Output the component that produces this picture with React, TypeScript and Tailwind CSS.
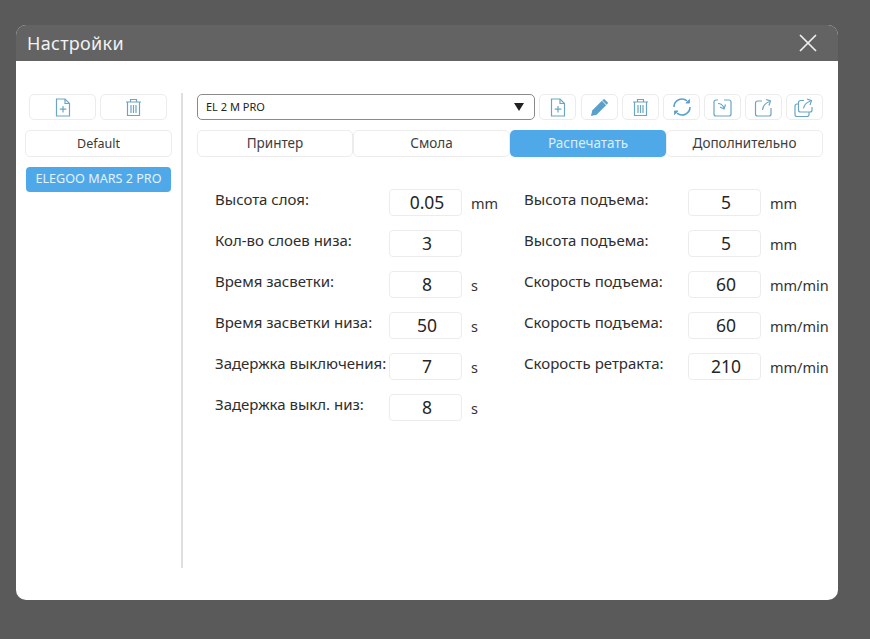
import React from "react";

const Stroke = "#6aa5c4";

function FileAdd() {
  return (
    <svg width="16" height="19" viewBox="0 0 16 19" fill="none" stroke={Stroke} strokeWidth="1.2">
      <path d="M1.5 1h8.5l4.5 4.5V18h-13z" />
      <path d="M10 1v4.5h4.5" />
      <path d="M8 8v6.5M4.7 11.2h6.6" />
    </svg>
  );
}
function Trash() {
  return (
    <svg width="17" height="19" viewBox="0 0 17 19" fill="none" stroke={Stroke} strokeWidth="1.2">
      <path d="M1 4h15M5.5 4V1.5h6V4" />
      <path d="M2.5 4v13.5h12V4" />
      <path d="M6 7v8M8.5 7v8M11 7v8" />
    </svg>
  );
}
function Pencil() {
  return (
    <svg width="19" height="19" viewBox="0 0 20 20" fill="#5aa0cb">
      <path d="M1 19l1.5-6L12.5 3l4.5 4.5L7 17.5z" />
      <path d="M14 1.5l1-.5 4 4-.5 1-1 1L13 2.5z" />
    </svg>
  );
}
function Refresh() {
  return (
    <svg width="20" height="20" viewBox="0 0 20 20" fill="none" stroke="#5aa0cb" strokeWidth="1.6">
      <path d="M2 10a8 8 0 0 1 13-6.2" />
      <path d="M18 10a8 8 0 0 1-13 6.2" />
      <path d="M17.5 2.5v3.6h-3.6z" fill="#5aa0cb" strokeWidth="0.8" />
      <path d="M2.5 17.5v-3.6h3.6z" fill="#5aa0cb" strokeWidth="0.8" />
    </svg>
  );
}
function ImportIcon() {
  return (
    <svg width="20" height="19" viewBox="0 0 20 19" fill="none" stroke={Stroke} strokeWidth="1.2">
      <path d="M5 2H3a2 2 0 0 0-2 2v12a2 2 0 0 0 2 2h13a2 2 0 0 0 2-2V4a2 2 0 0 0-2-2h-5" />
      <path d="M5 5.5C8 5.5 10 7.5 11 10" />
      <path d="M12.5 6.5L11 11 7 9" />
    </svg>
  );
}
function ExportIcon() {
  return (
    <svg width="20" height="19" viewBox="0 0 20 19" fill="none" stroke={Stroke} strokeWidth="1.2">
      <path d="M8 3H3.5a2 2 0 0 0-2 2v11a2 2 0 0 0 2 2H15a2 2 0 0 0 2-2v-6" />
      <path d="M8.5 12C9 8 11.5 5 15.5 3.5" />
      <path d="M12 1.5l4.5 1.5-1.5 4.5" />
    </svg>
  );
}
function ExportAllIcon() {
  return (
    <svg width="21" height="19" viewBox="0 0 21 19" fill="none" stroke={Stroke} strokeWidth="1.2">
      <path d="M10 2.5H6.5a2 2 0 0 0-2 2V12a2 2 0 0 0 2 2H16a2 2 0 0 0 2-2V9" />
      <path d="M4.5 6H3a2 2 0 0 0-2 2v8.5a2 2 0 0 0 2 2h10a2 2 0 0 0 2-2V14" />
      <path d="M9.5 10.5C10 7 12.5 4.5 16.5 3" />
      <path d="M13 1l4.5 1.7L16 7" />
    </svg>
  );
}

function IconButton({ children, className }: { children: React.ReactNode; className: string }) {
  return (
    <div className={`flex h-[26px] items-center justify-center rounded-[5px] border border-[#ececec] bg-white ${className}`}>
      {children}
    </div>
  );
}

function Field({ label, value, unit, labelClass }: { label: string; value: string; unit?: string; labelClass: string }) {
  return (
    <div className="flex h-[27px] items-center">
      <div className={`relative -top-[3px] shrink-0 whitespace-nowrap text-[15px] text-[#2e2e2e] ${labelClass}`}>{label}</div>
      <div className="ml-px flex h-[27px] w-[73px] shrink-0 items-center justify-center rounded-[4px] border border-[#ececec] bg-white pl-[3px] text-[17.5px] text-[#262626]">
        {value}
      </div>
      {unit && <div className="relative top-px ml-[9px] whitespace-nowrap text-[14.5px] text-[#333333]">{unit}</div>}
    </div>
  );
}

const leftFields = [
  { label: "Высота слоя:", value: "0.05", unit: "mm" },
  { label: "Кол-во слоев низа:", value: "3" },
  { label: "Время засветки:", value: "8", unit: "s" },
  { label: "Время засветки низа:", value: "50", unit: "s" },
  { label: "Задержка выключения:", value: "7", unit: "s" },
  { label: "Задержка выкл. низ:", value: "8", unit: "s" },
];
const rightFields = [
  { label: "Высота подъема:", value: "5", unit: "mm" },
  { label: "Высота подъема:", value: "5", unit: "mm" },
  { label: "Скорость подъема:", value: "60", unit: "mm/min" },
  { label: "Скорость подъема:", value: "60", unit: "mm/min" },
  { label: "Скорость ретракта:", value: "210", unit: "mm/min" },
];

export default function App() {
  return (
    <div className="h-[639px] w-[870px] overflow-hidden bg-[#5a5a5a] pl-4 pt-[25px] font-['Noto_Sans','Open_Sans',sans-serif]">
      <div className="flex h-[575px] w-[822px] flex-col overflow-hidden rounded-[10px] bg-white">
        <div className="flex h-[36px] shrink-0 items-center justify-between bg-[#636363] pl-[11px] pr-[20px]">
          <span className="text-[18px] tracking-[0.3px] text-[#f2f2f2]">Настройки</span>
          <svg width="20" height="20" viewBox="0 0 20 20" stroke="#f0f0f0" strokeWidth="1.7" fill="none">
            <path d="M2 2l16 16M18 2L2 18" />
          </svg>
        </div>

        <div className="flex flex-1 pl-[9px] pt-[33px]">
          <div className="flex w-[147px] shrink-0 flex-col">
            <div className="flex gap-1 px-1">
              <IconButton className="w-[67px]"><FileAdd /></IconButton>
              <IconButton className="w-[67px]"><Trash /></IconButton>
            </div>
            <div className="mt-[10px] flex h-[27px] items-center justify-center rounded-[5px] border border-[#ececec] pt-[2px] text-[12.5px] text-[#3a3a3a]">
              Default
            </div>
            <div className="mx-px mt-[10px] flex h-[25px] items-center justify-center rounded-[4px] bg-[#4fa9e9] text-[12.6px] text-[#e4f2fb]">
              ELEGOO MARS 2 PRO
            </div>
          </div>

          <div className="ml-[9px] -mt-px h-[475px] w-[2px] shrink-0 bg-[#dfdfdf]" />

          <div className="ml-[14px] flex w-[626px] flex-col">
            <div className="flex">
              <div className="flex h-[26px] w-[338px] items-center justify-between rounded-[5px] border border-[#8a8a8a] pl-[8px] pr-[10px] text-[11px] text-[#222222]">
                <span>EL 2 M PRO</span>
                <span className="h-0 w-0 border-x-[5.5px] border-t-[8px] border-x-transparent border-t-[#222222]" />
              </div>
              <div className="ml-1 flex gap-1">
                <IconButton className="w-[37px]"><FileAdd /></IconButton>
                <IconButton className="ml-[1px] w-[37px]"><Pencil /></IconButton>
                <IconButton className="w-[37px]"><Trash /></IconButton>
                <IconButton className="w-[37px]"><Refresh /></IconButton>
                <IconButton className="w-[37px]"><ImportIcon /></IconButton>
                <IconButton className="w-[37px]"><ExportIcon /></IconButton>
                <IconButton className="w-[37px]"><ExportAllIcon /></IconButton>
              </div>
            </div>

            <div className="mt-[10px] flex h-[27px] text-[13.5px] text-[#3d3d3d]">
              <div className="flex w-[156px] items-center justify-center rounded-[5px] border border-[#ececec]">Принтер</div>
              <div className="flex w-[157px] items-center justify-center rounded-[5px] border border-[#ececec]">Смола</div>
              <div className="flex w-[156px] items-center justify-center rounded-[5px] bg-[#4fa9e9] text-[#dceefb]">Распечатать</div>
              <div className="flex w-[157px] items-center justify-center rounded-[5px] border border-[#ececec]">Дополнительно</div>
            </div>

            <div className="mt-[32px] flex pl-[18px]">
              <div className="flex w-[309px] shrink-0 flex-col gap-[14px]">
                {leftFields.map((f) => <Field key={f.label} labelClass="w-[173px]" {...f} />)}
              </div>
              <div className="flex shrink-0 flex-col gap-[14px]">
                {rightFields.map((f, i) => (
                  <Field key={i} labelClass="w-[163px]" label={f.label} value={f.value} unit={f.unit} />
                ))}
              </div>
            </div>
          </div>
        </div>
      </div>
    </div>
  );
}
